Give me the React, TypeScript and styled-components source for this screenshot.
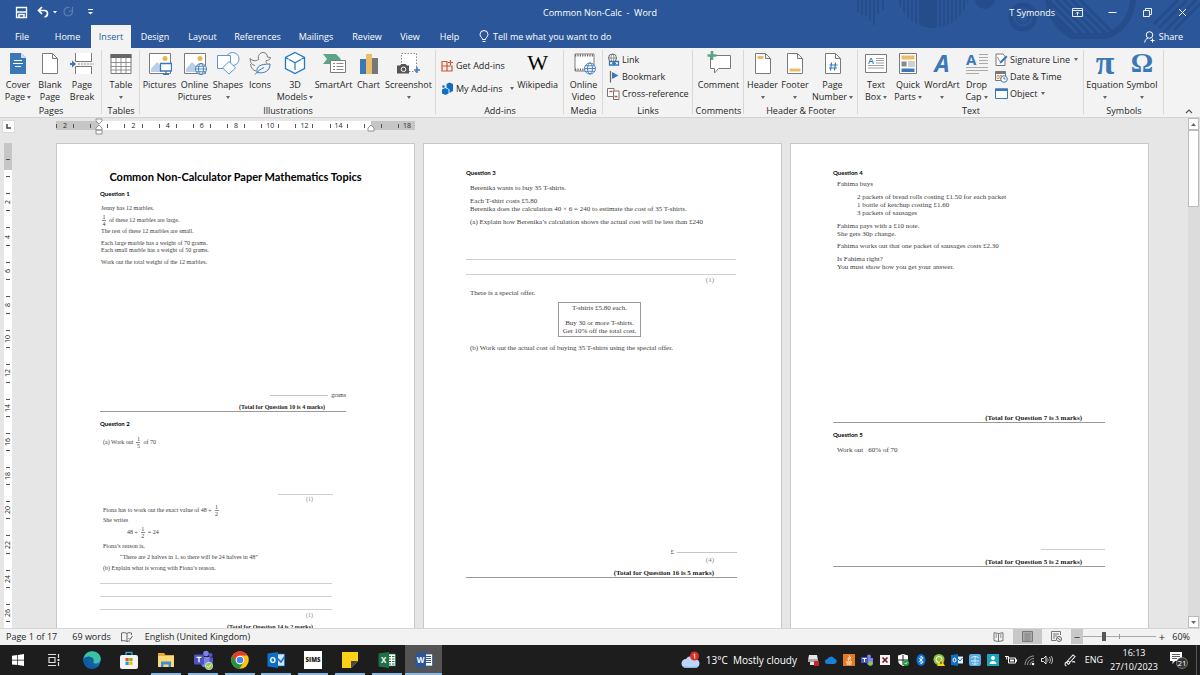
import React from 'react';
import styled, { createGlobalStyle, css } from 'styled-components';

const Global = createGlobalStyle`
  * { box-sizing: border-box; }
  body { margin: 0; font-family: "Open Sans", "Noto Sans", sans-serif; font-size: 9px; color: #262626; overflow: hidden; }
  button { font: inherit; color: inherit; background: none; border: 0; padding: 0; margin: 0; white-space: nowrap; }
  svg { display: block; flex: none; }
`;

const blue = '#2b579a';

/* ---------- shell ---------- */

const Shell = styled.div`
  display: flex;
  flex-direction: column;
  height: 100vh;
  background: #e6e6e6;
`;

const Head = styled.header`
  position: relative;
  flex: none;
  background: ${blue};
  color: #fff;
`;

const Pattern = styled.svg`
  position: absolute;
  top: 0;
  right: 0;
`;

const TitleBar = styled.div`
  position: relative;
  display: grid;
  grid-template-columns: 1fr auto 1fr;
  align-items: center;
  height: 24px;
`;

const QuickTools = styled.div`
  display: flex;
  align-items: center;
  gap: 5px;
  padding-left: 15px;
`;

const WindowTools = styled.div`
  display: flex;
  align-items: center;
  justify-content: flex-end;
`;

const UserName = styled.span`
  margin-right: 5px;
`;

const WinButton = styled.button`
  display: flex;
  justify-content: center;
  width: 35px;
`;

const TabRow = styled.nav`
  position: relative;
  display: flex;
  align-items: stretch;
  height: 24px;
`;

const Tab = styled.button<{ $w: number; $on?: boolean }>`
  width: ${(p) => p.$w}px;
  margin-top: 1px;
  ${(p) => p.$on && css`background: #f3f3f3; color: ${blue};`}
`;

const TabAction = styled.button<{ $right?: boolean }>`
  display: flex;
  align-items: center;
  gap: 4px;
  margin-top: 1px;
  ${(p) => (p.$right ? 'margin-left: auto; margin-right: 17px;' : 'margin-left: 9px;')}
`;

/* ---------- ribbon ---------- */

const Ribbon = styled.div`
  display: flex;
  flex: none;
  height: 70px;
  background: #f3f3f3;
  border-bottom: 1px solid #d2d2d2;
`;

const Group = styled.section<{ $w: number }>`
  display: flex;
  flex-direction: column;
  justify-content: space-between;
  width: ${(p) => p.$w}px;
  padding-top: 3px;
  background: linear-gradient(#d8d8d8, #d8d8d8) right 2px / 1px 64px no-repeat;
`;

const GroupBody = styled.div<{ $center?: boolean }>`
  display: flex;
  padding-left: ${(p) => (p.$center ? 0 : 2)}px;
  justify-content: ${(p) => (p.$center ? 'center' : 'flex-start')};
`;

const GroupName = styled.div`
  text-align: center;
  line-height: 12px;
`;

const BigButton = styled.button<{ $w: number }>`
  display: flex;
  flex-direction: column;
  align-items: center;
  width: ${(p) => p.$w}px;
  line-height: 12px;
  svg { margin-bottom: 4px; }
`;

const Glyph = styled.span<{ $size: number; $sans?: boolean; $slant?: boolean; $ink?: string }>`
  height: 24px;
  margin-bottom: 4px;
  font-family: ${(p) => (p.$sans ? '"Open Sans", sans-serif' : '"Liberation Serif", serif')};
  font-size: ${(p) => p.$size}px;
  font-weight: ${(p) => (p.$ink ? 400 : 700)};
  font-style: ${(p) => (p.$slant ? 'italic' : 'normal')};
  line-height: 24px;
  color: ${(p) => p.$ink || '#3a78b8'};
`;

const LabelLine = styled.span`
  display: flex;
  align-items: center;
  justify-content: center;
  gap: 2px;
  height: 12px;
`;

const Caret = styled.i`
  border: 2px solid transparent;
  border-top: 3px solid #666;
  border-bottom: 0;
`;

const Stack = styled.div<{ $roomy?: boolean }>`
  display: flex;
  flex-direction: column;
  align-items: flex-start;
  padding-left: ${(p) => (p.$roomy ? 3 : 2)}px;
  padding-top: ${(p) => (p.$roomy ? 6 : 0)}px;
  gap: ${(p) => (p.$roomy ? 7 : 1)}px;
`;

const SmallButton = styled.button<{ $gap?: number }>`
  display: flex;
  align-items: center;
  gap: 2px;
  height: 16px;
  ${Caret} { margin-left: ${(p) => p.$gap || 6}px; }
`;

const Collapse = styled.button`
  align-self: flex-end;
  margin: 0 7px 3px auto;
`;

/* ---------- editing area ---------- */

const Editor = styled.main`
  display: flex;
  flex: 1;
  min-height: 0;
`;

const LeftGutter = styled.div`
  display: flex;
  flex-direction: column;
  width: 17px;
  flex: none;
`;

const TabStop = styled.button`
  display: flex;
  align-items: center;
  justify-content: center;
  width: 13px;
  height: 13px;
  margin: 2px 0 10px 2px;
  background: #fcfcfc;
  border: 1px solid #dadada;
`;

const VRuler = styled.div`
  flex: 1;
  min-height: 0;
  overflow: hidden;
  width: 8px;
  margin-left: 4px;
  padding-top: 8px;
  background: linear-gradient(#c6c6c6 27px, #fff 27px);
`;

const VCells = styled.div`
  display: flex;
  flex-direction: column;
  height: 479px;
`;

const VCell = styled.div`
  display: flex;
  flex: 1;
  flex-direction: column;
  align-items: center;
  justify-content: space-between;
  padding: 8px 0;
  i { width: 4px; height: 1px; background: #555; }
  span { writing-mode: vertical-rl; transform: rotate(180deg); font-size: 7px; line-height: 8px; }
`;

const Workspace = styled.div`
  display: flex;
  flex: 1;
  flex-direction: column;
  align-items: center;
  min-width: 0;
`;

const Sheets = styled.div`
  display: flex;
  gap: 8px;
  flex: 1;
  min-height: 0;
  overflow: hidden;
`;

const RulerRow = styled.div`
  flex: none;
  width: 1093px;
  height: 25px;
  padding-top: 3px;
`;

const HRuler = styled.div`
  position: relative;
  width: 359px;
  height: 9px;
  background: linear-gradient(90deg, #c6c6c6 43px, #fff 43px, #fff 315px, #c6c6c6 315px);
`;

const HClip = styled.div`
  overflow: hidden;
`;

const HCells = styled.div`
  display: flex;
  width: 376px;
  margin-left: -8px;
`;

const HCell = styled.div`
  display: flex;
  flex: 1;
  align-items: center;
  justify-content: space-between;
  height: 9px;
  padding: 0 8px;
  font-size: 7px;
  i { width: 1px; height: 4px; background: #555; }
`;

const Marker = styled.svg<{ $x: number }>`
  position: absolute;
  left: ${(p) => p.$x}px;
  top: -3px;
`;

const Sheet = styled.article<{ $large?: boolean }>`
  width: 359px;
  height: 508px;
  flex: none;
  padding: 0 43px 0 ${(p) => (p.$large ? 42 : 43)}px;
  background: #fff;
  border: 1px solid #c8c8c8;
  font-family: "Liberation Serif", serif;
  font-size: ${(p) => (p.$large ? 7 : 6)}px;
  line-height: ${(p) => (p.$large ? 8 : 7)}px;
  color: #3c3c3c;
  white-space: nowrap;
`;

const DocTitle = styled.h1`
  margin: 26px 0 0;
  font: bold 11px/14px Lato, sans-serif;
  color: #000;
  text-align: center;
`;

const Question = styled.h2<{ $mt: number }>`
  margin: ${(p) => p.$mt}px 0 0;
  font: bold 6px/8px Lato, sans-serif;
  color: #000;
`;

const Line = styled.p<{ $mt?: number; $in?: number }>`
  margin: ${(p) => p.$mt || 0}px 0 0;
  padding-left: ${(p) => (p.$in === undefined ? 4 : p.$in)}px;
`;

const MathLine = styled(Line)`
  display: flex;
  align-items: center;
  gap: 3px;
  height: 14px;
`;

const Frac = styled.span`
  display: flex;
  flex-direction: column;
  text-align: center;
  width: 4px;
  span:first-child { border-bottom: 1px solid #888; }
  line-height: 6px;
`;

const Mark = styled.p<{ $mt?: number; $mr: number }>`
  margin: ${(p) => p.$mt || 0}px ${(p) => p.$mr}px 0 0;
  text-align: right;
  color: #888;
`;

const Total = styled.p<{ $mt: number; $mr: number }>`
  margin: ${(p) => p.$mt}px ${(p) => p.$mr}px 0 0;
  text-align: right;
  font-weight: bold;
  color: #222;
`;

const Rule = styled.hr<{ $w: number }>`
  width: ${(p) => p.$w}px;
  height: 1px;
  margin: 0;
  border: 0;
  background: #999;
`;

const Dots = styled.div<{ $mt: number; $w: number; $ml?: number }>`
  width: ${(p) => p.$w}px;
  height: 1px;
  margin: ${(p) => p.$mt}px 0 0 ${(p) => p.$ml || 0}px;
  background: #cfcfcf;
`;

const Answer = styled.div<{ $mt: number; $mr: number }>`
  display: flex;
  align-items: center;
  justify-content: flex-end;
  gap: 3px;
  margin: ${(p) => p.$mt}px ${(p) => p.$mr}px 0 0;
`;

const AnswerLine = styled.i<{ $w: number }>`
  width: ${(p) => p.$w}px;
  height: 1px;
  background: #c4c4c4;
`;

const Offer = styled.div`
  width: 83px;
  height: 35px;
  margin: 5px 0 0 92px;
  padding-top: 1px;
  border: 1px solid #999;
  text-align: center;
  p { margin: 0; }
  p:first-child { margin-bottom: 7px; }
`;

const ScrollBar = styled.div`
  display: flex;
  flex-direction: column;
  width: 12px;
  flex: none;
  background: #dcdcdc;
`;

const ScrollArrow = styled.button`
  display: flex;
  align-items: center;
  justify-content: center;
  height: 12px;
  width: 11px;
  background: #fff;
  border: 1px solid #bbb;
`;

const ScrollTrack = styled.div`
  flex: 1;
`;

const Thumb = styled.div`
  width: 11px;
  height: 77px;
  background: #fff;
  border: 1px solid #bbb;
`;

/* ---------- status bar ---------- */

const Status = styled.footer`
  display: flex;
  flex: none;
  align-items: center;
  height: 17px;
  padding: 0 10px 1px 6px;
  background: #f2f2f2;
  border-top: 1px solid #d6d6d6;
`;

const StatusItem = styled.button<{ $mr?: number }>`
  margin-right: ${(p) => p.$mr || 0}px;
`;

const ViewTools = styled.div`
  display: flex;
  align-self: stretch;
  margin-left: auto;
`;

const ViewButton = styled.button<{ $on?: boolean }>`
  display: flex;
  align-items: center;
  justify-content: center;
  width: 29px;
  background: ${(p) => (p.$on ? '#c8c8c8' : 'transparent')};
`;

const ZoomStep = styled.button<{ $on?: boolean }>`
  width: 12px;
  font-size: 11px;
  line-height: 14px;
  background: ${(p) => (p.$on ? '#c8c8c8' : 'transparent')};
`;

const ZoomRange = styled.input`
  appearance: none;
  align-self: center;
  width: 73px;
  height: 9px;
  margin: 0;
  background:
    linear-gradient(#999, #999) 50% 50% / 1px 5px no-repeat,
    linear-gradient(#aaa, #aaa) 0 50% / 100% 1px no-repeat;
  &::-webkit-slider-thumb {
    appearance: none;
    width: 4px;
    height: 9px;
    background: #555;
  }
`;

const ZoomValue = styled.button`
  width: 22px;
  text-align: right;
`;

/* ---------- task bar ---------- */

const TaskBar = styled.footer`
  display: flex;
  flex: none;
  height: 30px;
  background: #1d1d1d;
  color: #fff;
`;

const TaskButton = styled.button`
  display: flex;
  align-items: center;
  justify-content: center;
  width: 36px;
`;

const Apps = styled.div`
  display: flex;
  width: 368px;
  margin-left: 2px;
`;

const AppButton = styled.button<{ $open?: boolean; $on?: boolean }>`
  display: flex;
  flex: 1;
  align-items: center;
  justify-content: center;
  background:
    ${(p) => (p.$open ? `linear-gradient(#8ab8e0, #8ab8e0) 50% 100% / ${p.$on ? '100%' : '30px'} 2px no-repeat` : 'none')}
    ${(p) => (p.$on ? ', #545454' : '')};
`;

const Tray = styled.div`
  display: flex;
  align-items: center;
  margin-left: auto;
`;

const Weather = styled.button`
  display: flex;
  align-items: center;
  gap: 5px;
  margin-right: 7px;
  font-size: 10px;
`;

const TrayIcon = styled.button<{ $w?: number }>`
  display: flex;
  align-items: center;
  justify-content: center;
  width: ${(p) => p.$w || 18}px;
`;

const TrayText = styled.button<{ $w: number }>`
  width: ${(p) => p.$w}px;
  text-align: center;
  line-height: 14px;
`;

const Notices = styled(TrayIcon)`
  margin: 0 4px;
`;

const Desktop = styled.button`
  width: 4px;
  align-self: stretch;
  border-left: 1px solid #555;
`;

/* ---------- icons ---------- */

type IP = { s?: number; w?: number; h?: number; children: React.ReactNode };
const Ico = ({ s = 24, w, h, children }: IP) => (
  <svg width={w || s} height={h || s} viewBox={`0 0 ${w || s} ${h || s}`} fill="none" aria-hidden="true">
    {children}
  </svg>
);

const G = '#7a7a7a';
const B = '#3a78b8';

const Globe = ({ x, y, r }: { x: number; y: number; r: number }) => (
  <g stroke={B} strokeWidth=".9" fill="#fff">
    <circle cx={x} cy={y} r={r} />
    <ellipse cx={x} cy={y} rx={r * 0.45} ry={r} fill="none" />
    <path d={`M${x - r} ${y}h${2 * r}M${x - r * 0.85} ${y - r / 2}h${1.7 * r}M${x - r * 0.85} ${y + r / 2}h${1.7 * r}`} />
  </g>
);

const Paper = () => <path d="M4.500 2.500h10l5 5v15h-15zM14.500 2.500v5h5" fill="#fff" stroke={G} />;

const Photo = () => (
  <>
    <path d="M1.500 2.500h21v20h-21z" fill="#fff" stroke={G} />
    <path d="M3 21v-3l6-7 5 5v5z" fill="#b7cfe8" />
    <circle cx="17" cy="7.500" r="2.500" fill="#e9b64d" />
  </>
);

const icons = {
  cover: (
    <Ico>
      <path d="M4 2h11l5 5v16H4z" fill={B} />
      <path d="M15 2v5h5z" fill="#cfe0f2" />
      <path d="M8 9.500h8M7 12.500h10M9 15.500h6" stroke="#fff" />
    </Ico>
  ),
  blank: <Ico><Paper /></Ico>,
  pageBreak: (
    <Ico>
      <path d="M5.500 2v8.500h16V2M5.500 23v-7.500h16V23" stroke={G} fill="#fff" />
      <path d="M8 13h16" stroke="#999" strokeDasharray="2 1" />
      <path d="M2 9.500v7l4-3.500z" fill={B} />
      <path d="M0 13h3" stroke={B} strokeWidth="2" />
    </Ico>
  ),
  table: (
    <Ico>
      <path d="M2 3.500h20v19H2z" fill="#fff" stroke={G} />
      <path d="M1.500 3h21v4h-21z" fill="#666" />
      <path d="M2 11.500h20M2 15.500h20M2 19h20M7 7v15M12 7v15M17 7v15" stroke={G} strokeWidth=".8" />
    </Ico>
  ),
  pictures: (
    <Ico>
      <Photo />
      <path d="M12.500 12.500h11v7.500h-11z" fill="#fff" stroke={B} strokeWidth="1.300" />
      <path d="M18 20v3M15 23.300h6" stroke={B} strokeWidth="1.300" />
    </Ico>
  ),
  onlinePictures: <Ico><Photo /><Globe x={18} y={18} r={5.5} /></Ico>,
  shapes: (
    <Ico>
      <circle cx="16.500" cy="8" r="6.500" stroke="#5e97d0" fill="#fff" />
      <path d="M1.500 4.500h13v13h-13z" stroke="#5e97d0" fill="#fff" />
      <path d="M13 10.500l6.500 6.300-6.500 6.300-6.500-6.300z" stroke="#5e97d0" fill="#fff" />
    </Ico>
  ),
  icons: (
    <Ico>
      <path d="M10.500 8.500C9.500 4.500 12 1.500 15 1.500c3 0 4.500 2 4.300 4.500l3.200.500c-.300 2.200-2 3-4.300 3-.700 1 .300 2 .600 3M10.500 8.500c-3 2-6 1.500-8.500-1 .300 4 1.500 6.500 5 7M2.500 13c.500 4 2.500 6.500 5.500 7" stroke={G} />
      <path d="M9 21.500c-1-6 3-8.500 13-8.500 0 6.500-5 10-13 8.500M7 23.500c3-3.500 5-5 9-7" stroke={B} fill="none" />
    </Ico>
  ),
  cube: (
    <Ico>
      <path d="M12 1.500l9.500 5v11L12 22.500l-9.500-5v-11z" fill="#fff" stroke="#1f7ac8" strokeWidth="1.300" />
      <path d="M6 8.500l6 3.200 6-3.200M12 12v7M2.500 6.500l3 1.600M21.500 6.500l-3 1.600" stroke="#1f7ac8" strokeWidth="1.200" />
    </Ico>
  ),
  smartart: (
    <Ico>
      <path d="M1 3h13l5 5-5 5H1l4-5z" fill="#5ba587" />
      <path d="M8.500 9.500h15v12h-15z" fill="#fff" stroke={G} />
      <path d="M11 12.500h2M14.500 12.500h7M11 15.500h2M14.500 15.500h7M11 18.500h2M14.500 18.500h7" stroke={G} strokeWidth=".9" />
    </Ico>
  ),
  chart: (
    <Ico>
      <path d="M3 8h6v15H3z" fill={B} />
      <path d="M9 3h6v20H9z" fill="#ecbd68" />
      <path d="M15 7h6v16h-6z" fill="#777" />
    </Ico>
  ),
  screenshot: (
    <Ico>
      <path d="M4.500 2.500h15v18h-15z" stroke="#888" strokeDasharray="1.500 1.500" fill="#fff" />
      <path d="M0 14.500h3L4.500 13h4l1.500 1.500h2v8H0z" fill="#555" />
      <circle cx="6.500" cy="18.300" r="2.300" stroke="#fff" />
      <path d="M20 16v6M17 19h6" stroke={B} strokeWidth="1.500" />
    </Ico>
  ),
  wiki: <Glyph $size={22} $ink="#000">W</Glyph>,
  video: (
    <Ico>
      <path d="M3 3h19v17H3z" fill="#fff" stroke={G} />
      <path d="M3 4.500h19M3 18.500h12" stroke="#666" strokeWidth="2.200" strokeDasharray="1.200 1.200" />
      <Globe x={18} y={17.5} r={5.5} />
    </Ico>
  ),
  comment: (
    <Ico>
      <path d="M3.500 4.500h20v13h-12l-4 4.500v-4.500h-4z" fill="#fff" stroke={G} />
      <path d="M5 0v9M.500 4.500h9" stroke="#5ba587" strokeWidth="2.600" />
    </Ico>
  ),
  header: <Ico><Paper /><path d="M6.500 5h6v3h-6z" fill="#ecbd68" /></Ico>,
  footer: <Ico><Paper /><path d="M6.500 17.500h11v3h-11z" fill="#ecbd68" /></Ico>,
  pageNo: (
    <Ico><Paper /><path d="M10.500 11.500l-1 8M14.500 11.500l-1 8M8.500 14h8M8 17h8" stroke={B} strokeWidth="1.200" /></Ico>
  ),
  textBox: (
    <Ico>
      <path d="M1.500 3.500h21v18h-21z" fill="#fff" stroke={G} />
      <text x="4" y="13" fontFamily="Open Sans, sans-serif" fontWeight="600" fontSize="9" fill={B}>A</text>
      <path d="M12 7.500h8M12 9.500h8M12 12h8M4 14.500h16M4 17h16" stroke="#888" strokeWidth=".8" />
    </Ico>
  ),
  quick: (
    <Ico>
      <path d="M3.500 2.500h17v20h-17z" fill="#fff" stroke={G} />
      <path d="M5.500 4.500h13v4h-13z" fill="#ecbd68" />
      <path d="M5.500 10.500h5v5h-5z" fill="#888" />
      <path d="M12 11h7M12 13h7M12 15h7" stroke="#888" strokeWidth=".8" />
      <path d="M5.500 17.500h13v3.500h-13z" fill={B} />
    </Ico>
  ),
  wordart: <Glyph $size={24} $sans $slant>A</Glyph>,
  dropCap: (
    <Ico>
      <text x="1" y="14" fontFamily="Open Sans, sans-serif" fontWeight="700" fontSize="15" fill={B}>A</text>
      <path d="M14 3.500h9M14 6.500h9M14 9.500h9M14 12.500h9M1 16.500h22M1 19.500h22M1 22.500h13" stroke="#aaa" />
    </Ico>
  ),
  pi: <Glyph $size={34}>π</Glyph>,
  omega: <Glyph $size={28}>Ω</Glyph>,
  getAdd: (
    <Ico s={13}>
      <path d="M1 2.500h5v4.500H1zM1 7h5v5H1zM6 7h5v5H6z" stroke="#d35230" strokeWidth="1.200" />
      <path d="M9.500 1v5M7 3.500h5" stroke="#d35230" strokeWidth="1.200" />
    </Ico>
  ),
  myAdd: (
    <Ico s={13}>
      <path d="M5.500 2l3-1.500 3.500 1.500v7l-3.500 2V7.500l-3-2z" fill="#0f6fc6" />
      <path d="M1 7.500L4 6l3.500 1.500v4L4.500 13 1 11.500z" fill="#0f6fc6" />
      <circle cx="2.500" cy="4.500" r="1.300" fill="#0f6fc6" />
    </Ico>
  ),
  link: (
    <Ico s={13}>
      <circle cx="5.500" cy="5" r="4" stroke="#666" fill="#fff" />
      <path d="M1.500 5h8M5.500 1c-2 2-2 6 0 8M5.500 1c2 2 2 6 0 8" stroke="#666" strokeWidth=".7" />
      <path d="M2.500 8.500h4v3.500h-4zM7.500 8.500h4v3.500h-4z" fill="#fff" stroke={B} strokeWidth="1.300" />
      <path d="M5 10.300h4" stroke={B} strokeWidth="1.300" />
    </Ico>
  ),
  bookmark: (
    <Ico s={13}>
      <path d="M3.500 1v11.500" stroke="#666" strokeWidth="1.200" />
      <path d="M5 2l6.500 3.500L5 9z" fill={B} />
    </Ico>
  ),
  cross: (
    <Ico s={13}>
      <path d="M.500 1.500h6.500v8H.500z" fill="#fff" stroke="#777" />
      <path d="M6.500 4h5.500v8.500H6.500z" fill="#fff" stroke="#777" />
      <path d="M2.500 4.500h3M7.500 9.500h3" stroke="#d35230" strokeWidth="1.300" />
    </Ico>
  ),
  signature: (
    <Ico s={13}>
      <path d="M1 1h7l2 2.500V12.500H1z" fill="#fff" stroke="#777" />
      <path d="M2.500 4l2.500 5 7-6" stroke="#777" strokeWidth=".8" />
      <path d="M4.500 11l1-3L11 2.500l1.500 1.500L7 9.500z" fill={B} />
    </Ico>
  ),
  date: (
    <Ico s={13}>
      <path d="M.500 1.500h10v9H.500z" fill="#fff" stroke="#777" />
      <path d="M.500 2h10v2H.500z" fill="#777" />
      <path d="M2 5.500h2v3H2zM5 5.500h2v3H5z" stroke="#d98a3c" strokeWidth=".8" />
      <circle cx="9" cy="9" r="3.300" fill="#fff" stroke={B} />
      <path d="M9 7v2h1.500" stroke="#555" strokeWidth=".8" />
    </Ico>
  ),
  object: (
    <Ico s={13}>
      <path d="M.500 2h12v9.500H.500z" fill="#fff" stroke={B} />
      <path d="M0 1.500h13V4H0z" fill={B} />
    </Ico>
  ),
};

const BackPattern = () => (
  <Pattern width="350" height="48" viewBox="0 0 350 48" fill="none" aria-hidden="true">
    <defs>
      <clipPath id="dome"><circle cx="83" cy="-8" r="36" /></clipPath>
      <clipPath id="bowl"><path d="M196 0h72v34h-46c-12-6-22-18-26-34z" /></clipPath>
    </defs>
    <g stroke="#254d8b" strokeWidth="2">
      <path d="M8 0v12M12 0v15M16 0v16M20 0v21M24 0v25M28 0v14M33 0v10" />
      <path d="M50 0v30M54 0v30M58 0v30M62 0v30M66 0v30M90 0v30M94 0v30M98 0v30M102 0v30M106 0v30M110 0v30M114 0v30M118 0v30" clipPath="url(#dome)" />
    </g>
    <path d="M69 0h18v30H69z" fill="#254d8b" clipPath="url(#dome)" />
    <circle cx="135" cy="-1" r="10" fill="#254d8b" />
    <circle cx="173" cy="17" r="12" stroke="#254d8b" strokeWidth="5" />
    <circle cx="173" cy="17" r="6" stroke="#254d8b" strokeWidth="3" strokeDasharray="2 1" />
    <path d="M198 0c2 20 14 30 24 36h34c14-4 26-18 27-36" stroke="#254d8b" strokeWidth="6" />
    <path d="M190 0l44 44M198 0l44 44M206 0l44 44M214 0l44 44M222 0l44 44M230 0l44 44" stroke="#254d8b" strokeWidth="3" clipPath="url(#bowl)" />
    <path d="M304 24L328 0M309 28L337 0M314 32L346 0M324 30L350 4" stroke="#254d8b" strokeWidth="3" />
  </Pattern>
);

/* ---------- helpers ---------- */

type BigProps = { w: number; icon: React.ReactNode; a: string; b?: string; drop?: boolean };
const Big = ({ w, icon, a, b, drop }: BigProps) => (
  <BigButton $w={w}>
    {icon}
    <LabelLine>{a}</LabelLine>
    <LabelLine>{b}{drop && <Caret />}</LabelLine>
  </BigButton>
);

type SmallProps = { icon: React.ReactNode; text: string; drop?: number };
const Small = ({ icon, text, drop }: SmallProps) => (
  <SmallButton $gap={drop}>{icon}{text}{drop ? <Caret /> : null}</SmallButton>
);

type SectionProps = { w: number; name: string; center?: boolean; children: React.ReactNode };
const Section = ({ w, name, center, children }: SectionProps) => (
  <Group $w={w}>
    <GroupBody $center={center}>{children}</GroupBody>
    <GroupName>{name}</GroupName>
  </Group>
);

const Fraction = ({ n, d }: { n: string; d: string }) => <Frac><span>{n}</span><span>{d}</span></Frac>;

const tabs: [string, number][] = [
  ['File', 44], ['Home', 47], ['Insert', 40], ['Design', 48], ['Layout', 47], ['References', 63],
  ['Mailings', 54], ['Review', 48], ['View', 38], ['Help', 41],
];

const hNumbers = ['2', '', '2', '4', '6', '8', '10', '12', '14', '', '18'];
const vNumbers = ['', '2', '4', '6', '8', '10', '12', '14', '16', '18', '20', '22', '24', '26'];

const OfficeTile = ({ c, d, l, kind }: { c: string; d: string; l: string; kind: string }) => (
  <Ico s={18}>
    <path d="M9 3h8.500v12H9z" fill={kind === 'mail' ? '#cfe6f8' : '#fff'} stroke={d} strokeWidth=".7" />
    {kind === 'mail' ? (
      <path d="M10 7l4 4 4-6" stroke={c} strokeWidth="1.500" />
    ) : kind === 'grid' ? (
      <path d="M11 5.500h2M14 5.500h2.500M11 8h2M14 8h2.500M11 10.500h2M14 10.500h2.500M11 13h2M14 13h2.500" stroke={c} strokeWidth="1.200" />
    ) : (
      <path d="M11 5.500h5M11 7.500h5M11 9.500h5M11 11.500h5" stroke={c} />
    )}
    <path d="M.500 2.500L11 1v16L.500 15.500z" fill={c} />
    <text x="5.700" y="12" textAnchor="middle" fontFamily="Open Sans, sans-serif" fontWeight="bold" fontSize="8" fill="#fff">{l}</text>
  </Ico>
);

const appIcons: [string, boolean, React.ReactNode][] = [
  ['Edge', false, (
    <Ico s={18}>
      <circle cx="9" cy="9" r="8.700" fill="#1477c6" />
      <path d="M.500 8C1.500 3 5 .300 9 .300c5 0 8.700 3.500 8.700 7.500 0 3-2.200 4.600-4.700 4.600-2 0-3-.700-2.600-1.600.900-1.500.300-4.500-3.200-4.800C4 5.700 1.500 6.300.500 8z" fill="#39c3a4" />
      <path d="M.500 8C2 6 5 5 7.500 6 5 7 4.500 10 6 12.500c1.500 2.300 5 3.600 9.500 2C13 18 8 18.800 4.500 16.500 1.500 14.700 0 11.500.500 8z" fill="#0e5ba8" />
      <path d="M10.400 10.800c.900-1.500.300-4.500-3.200-4.800-2.500 1.200-2.500 4.500-1.200 6.500 2 2.800 7 3.500 10 .500-2 .800-6 .500-5.600-2.200z" fill="#1d1d1d" opacity=".25" />
    </Ico>
  )],
  ['Store', false, (
    <Ico s={18}>
      <path d="M6 4V1.500h6V4" stroke="#2aa4dd" strokeWidth="1.300" />
      <rect x="0" y="4" width="18" height="14" rx="2" fill="#f4f4f4" />
      <path d="M5.500 7h3.200v3.200H5.500z" fill="#f25022" /><path d="M9.300 7h3.200v3.200H9.300z" fill="#7fba00" />
      <path d="M5.500 10.800h3.200V14H5.500z" fill="#00a4ef" /><path d="M9.300 10.800h3.200V14H9.300z" fill="#ffb900" />
    </Ico>
  )],
  ['File Explorer', true, (
    <Ico s={18}>
      <path d="M1 2h6l1.500 2H17v12H1z" fill="#e8a92c" />
      <path d="M1 5h16v11H1z" fill="#fbd876" />
      <path d="M4 16V10.500h10V16h-2.500v-2.500h-5V16z" fill="#3f8fd2" />
    </Ico>
  )],
  ['Teams', true, (
    <Ico s={20}>
      <circle cx="13" cy="3.500" r="2.800" fill="#7b83eb" /><circle cx="17.500" cy="5" r="2" fill="#5059c9" />
      <path d="M8 7h9v6a4.500 4.500 0 0 1-9 0z" fill="#7b83eb" /><path d="M16.500 7.500H20v5a2.500 2.500 0 0 1-3.500 2z" fill="#5059c9" />
      <rect x="1" y="4.500" width="10" height="10" rx="1" fill="#4b53bc" />
      <path d="M3.500 7.300h5M6 7.300v5" stroke="#fff" strokeWidth="1.300" />
      <circle cx="16" cy="16" r="3.700" fill="#92c353" stroke="#fff" strokeWidth=".6" />
      <path d="M14 16l1.500 1.500 2.500-3" stroke="#fff" />
    </Ico>
  )],
  ['Chrome', true, (
    <Ico s={18}>
      <circle cx="9" cy="9" r="8.800" fill="#fbc116" />
      <path d="M1.400 4.600A8.800 8.800 0 0 1 16.600 4.600H9A4.400 4.400 0 0 0 5 11z" fill="#e33b2e" />
      <path d="M1.400 4.600A8.800 8.800 0 0 0 8.500 17.800L12.800 11.200A4.400 4.400 0 0 1 5 11z" fill="#229342" />
      <circle cx="9" cy="9" r="4.200" fill="#fff" /><circle cx="9" cy="9" r="3.300" fill="#4285f4" />
    </Ico>
  )],
  ['Outlook', true, <OfficeTile c="#0f6fc6" d="#0f6fc6" l="O" kind="mail" />],
  ['SIMS', true, (
    <Ico s={18}>
      <path d="M0 0h18v18H0z" fill="#fff" />
      <text x="9" y="11" textAnchor="middle" fontFamily="Open Sans, sans-serif" fontWeight="800" fontSize="6" fill="#222">SIMS</text>
    </Ico>
  )],
  ['Sticky Notes', true, (
    <Ico s={18}>
      <path d="M1 1h16v9l-7 7H1z" fill="#fcd116" /><path d="M10 17v-7h7z" fill="#4a4a4a" />
    </Ico>
  )],
  ['Excel', true, <OfficeTile c="#1e7145" d="#1e7145" l="X" kind="grid" />],
  ['Word', true, <OfficeTile c="#2b579a" d="#2b579a" l="W" kind="doc" />],
];

const trayIcons: [string, React.ReactNode][] = [
  ['Printer', <Ico s={12}><path d="M2 1h8l1 5H1zM3 7h6v4H3z" fill="#e4e4e4" /><path d="M1 5h10v3H1z" fill="#aaa" /><path d="M7 7h5v5H7z" fill="#c8232c" /></Ico>],
  ['OneDrive', <Ico s={12}><path d="M2.500 10a2.500 2.500 0 0 1 0-5A3.800 3.800 0 0 1 9.300 4.500 2.800 2.800 0 0 1 9.500 10z" fill="#1b7fd6" /></Ico>],
  ['Java', <Ico s={12}><path d="M0 0h12v12H0z" fill="#e57a22" /><path d="M6 1.500c2 2-2.500 2.500-.300 5M8 3c-2 1.500-1 2-.800 3.500M3 8h6M3.500 10h5" stroke="#fff" /></Ico>],
  ['Teams', <Ico s={12}><circle cx="8" cy="2.500" r="2" fill="#7b83eb" /><path d="M5 4h7v4a3 3 0 0 1-6 1z" fill="#7b83eb" /><path d="M0 3h7v6H0z" fill="#4b53bc" /><path d="M1.500 4.500h4M3.500 4.500V8" stroke="#fff" /><circle cx="9.500" cy="9.500" r="2.300" fill="#92c353" /></Ico>],
  ['Blocked', <Ico s={12}><path d="M1 1h10v10H1z" fill="#f4f4f4" /><path d="M3.500 3.500l5 5M8.500 3.500l-5 5" stroke="#7a1018" strokeWidth="1.600" /></Ico>],
  ['Security', <Ico s={12}><path d="M6 0l5 1.500V6c0 3-2 5-5 6-3-1-5-3-5-6V1.500z" fill="#fff" /><path d="M6 1v10M1 6h10" stroke="#1d1d1d" /><circle cx="9" cy="9" r="3" fill="#1fa04b" /><path d="M7.700 9l1 1 1.700-2" stroke="#fff" strokeWidth=".8" /></Ico>],
  ['Bluetooth', <Ico s={12}><ellipse cx="6" cy="6" rx="4.500" ry="6" fill="#0a6fd6" /><path d="M3.800 4l4.400 4L6 10V2l2.200 2-4.400 4" stroke="#fff" strokeWidth=".9" /></Ico>],
  ['Monitor', <Ico s={12}><circle cx="6" cy="5.500" r="5.500" fill="#8cc63f" /><circle cx="6" cy="5.500" r="3" stroke="#fff" /><path d="M8 5l4 7H4z" fill="#f7d11e" /><path d="M8 7.500v2.500" stroke="#222" /></Ico>],
  ['Outlook', <Ico s={12}><path d="M6 2.500h6v7H6z" fill="#e2f0fb" /><path d="M7 5l2 2 2.500-3" stroke="#0f6fc6" /><path d="M0 1l7-1v12l-7-1z" fill="#0f6fc6" /><ellipse cx="3.500" cy="6" rx="1.500" ry="2" stroke="#fff" /></Ico>],
  ['Network', <Ico s={12}><rect width="12" height="12" rx="2" fill="#5aa9e0" /><path d="M2 4c2-2 6-2 8 0M2 7h8M3 9.500c2 1 4 1 6 0M6 2v8" stroke="#d9efff" strokeWidth=".9" /></Ico>],
  ['Account', <Ico s={12}><path d="M0 0h12v12H0z" fill="#18a5b8" /><circle cx="6" cy="4" r="2" fill="#fff" /><path d="M2.500 10c0-4 7-4 7 0z" fill="#fff" /></Ico>],
  ['Battery', <Ico s={12}><path d="M3.500 4h7v5h-7zM10.500 5.500h1v2h-1" stroke="#fff" fill="none" /><path d="M5 5.500h4v2H5z" fill="#fff" /><path d="M0 2.500h3.500v2.500M1.700 2.500v3" stroke="#fff" /></Ico>],
  ['Wi-Fi', <Ico s={12}><g stroke="#aaa" strokeWidth=".9"><path d="M2 11C2 6 6 2 11 2M4.500 11c0-3.500 3-6.500 6.500-6.500M7 11c0-2 2-4 4-4" /></g><circle cx="10" cy="10" r="1.300" fill="#fff" /></Ico>],
  ['Volume', <Ico s={12}><path d="M.500 4.500h2l2.500-2.500v8L2.500 7.500h-2z" stroke="#fff" strokeWidth=".9" /><path d="M6.500 4.500c.800 1 .800 2 0 3M8.300 3c1.500 2 1.500 4 0 6M10 2c2 2.500 2 5.500 0 8" stroke="#ccc" strokeWidth=".9" /></Ico>],
];

/* ---------- documents ---------- */

const SheetOne = () => (
  <Sheet>
    <DocTitle>Common Non-Calculator Paper Mathematics Topics</DocTitle>
    <Question $mt={6}>Question 1</Question>
    <Line $mt={7} $in={1}>Jenny has 12 marbles.</Line>
    <MathLine $mt={1} $in={2}><Fraction n="1" d="4" />of these 12 marbles are large.</MathLine>
    <Line $mt={1} $in={1}>The rest of these 12 marbles are small.</Line>
    <Line $mt={5} $in={1}>Each large marble has a weight of 70 grams.</Line>
    <Line $in={1}>Each small marble has a weight of 50 grams.</Line>
    <Line $mt={5} $in={1}>Work out the total weight of the 12 marbles.</Line>
    <Answer $mt={126} $mr={25}><AnswerLine $w={58} />grams</Answer>
    <Total $mt={5} $mr={46}>(Total for Question 10 is 4 marks)</Total>
    <Rule $w={246} />
    <Question $mt={8}>Question 2</Question>
    <MathLine $mt={7} $in={3}>(a) Work out <Fraction n="1" d="5" /> of 70</MathLine>
    <Dots $mt={45} $w={55} $ml={178} />
    <Mark $mt={1} $mr={58}>(1)</Mark>
    <MathLine $in={3}>Fiona has to work out the exact value of 48 ÷ <Fraction n="1" d="2" /></MathLine>
    <Line $in={3}>She writes</Line>
    <MathLine $mt={1} $in={27}>48 ÷ <Fraction n="1" d="2" /> = 24</MathLine>
    <Line $mt={4} $in={3}>Fiona’s reason is,</Line>
    <Line $mt={4} $in={20}>“There are 2 halves in 1, so there will be 24 halves in 48”</Line>
    <Line $mt={4} $in={3}>(b) Explain what is wrong with Fiona’s reason.</Line>
    <Dots $mt={11} $w={232} />
    <Dots $mt={12} $w={232} />
    <Dots $mt={12} $w={232} />
    <Mark $mt={2} $mr={58}>(1)</Mark>
    <Total $mt={5} $mr={58}>(Total for Question 14 is 2 marks)</Total>
  </Sheet>
);

const SheetTwo = () => (
  <Sheet $large>
    <Question $mt={25}>Question 3</Question>
    <Line $mt={7}>Berenika wants to buy 35 T-shirts.</Line>
    <Line $mt={5}>Each T-shirt costs £5.80</Line>
    <Line>Berenika does the calculation 40 × 6 = 240 to estimate the cost of 35 T-shirts.</Line>
    <Line $mt={5}>(a) Explain how Berenika’s calculation shows the actual cost will be less than £240</Line>
    <Dots $mt={33} $w={270} />
    <Dots $mt={14} $w={270} />
    <Mark $mt={1} $mr={24}>(1)</Mark>
    <Line $mt={5}>There is a special offer.</Line>
    <Offer>
      <p>T-shirts £5.80 each.</p>
      <p>Buy 30 or more T-shirts.</p>
      <p>Get 10% off the total cost.</p>
    </Offer>
    <Line $mt={7}>(b) Work out the actual cost of buying 35 T-shirts using the special offer.</Line>
    <Answer $mt={196} $mr={1}>£<AnswerLine $w={60} /></Answer>
    <Mark $mr={24}>(4)</Mark>
    <Total $mt={5} $mr={24}>(Total for Question 16 is 5 marks)</Total>
    <Rule $w={271} />
  </Sheet>
);

const SheetThree = () => (
  <Sheet $large>
    <Question $mt={25}>Question 4</Question>
    <Line $mt={3}>Fahima buys</Line>
    <Line $mt={5} $in={24}>2 packets of bread rolls costing £1.50 for each packet</Line>
    <Line $in={24}>1 bottle of ketchup costing £1.60</Line>
    <Line $in={24}>3 packets of sausages</Line>
    <Line $mt={5}>Fahima pays with a £10 note.</Line>
    <Line>She gets 30p change.</Line>
    <Line $mt={4}>Fahima works out that one packet of sausages costs £2.30</Line>
    <Line $mt={5}>Is Fahima right?</Line>
    <Line>You must show how you get your answer.</Line>
    <Total $mt={143} $mr={23}>(Total for Question 7 is 3 marks)</Total>
    <Rule $w={272} />
    <Question $mt={8}>Question 5</Question>
    <Line $mt={7}>Work out &nbsp; 60% of 70</Line>
    <Dots $mt={95} $w={64} $ml={208} />
    <Total $mt={8} $mr={23}>(Total for Question 5 is 2 marks)</Total>
    <Rule $w={272} />
  </Sheet>
);

/* ---------- app ---------- */

export default function App() {
  return (
    <Shell>
      <Global />
      <Head>
        <BackPattern />
        <TitleBar>
          <QuickTools>
            <button aria-label="Save">
              <Ico s={13}><path d="M1.500 1.500h10v10h-10z" stroke="#fff" strokeWidth="1.300" /><path d="M2 6h9M4 11V8.500h5V11" stroke="#fff" strokeWidth="1.500" /></Ico>
            </button>
            <button aria-label="Undo">
              <Ico w={24} h={12}><path d="M9 1L5.500 4.500 9 8M6 4.500h5.500c4 0 4 6 0 6.500" stroke="#fff" strokeWidth="1.700" /><path d="M20 5h4l-2 2.500z" fill="#fff" /></Ico>
            </button>
            <button aria-label="Redo">
              <Ico w={14} h={12}><path d="M7.500 1.500A4.300 4.300 0 1 0 10.500 5M10.500 1v4H7" stroke="#5b80b8" strokeWidth="1.200" /></Ico>
            </button>
            <button aria-label="Customise">
              <Ico w={20} h={10}><path d="M7 2.500h5" stroke="#fff" /><path d="M7 5h5l-2.500 2.500z" fill="#fff" /></Ico>
            </button>
          </QuickTools>
          <span>Common Non-Calc&nbsp; -&nbsp; Word</span>
          <WindowTools>
            <UserName>T Symonds</UserName>
            <WinButton aria-label="Ribbon display">
              <Ico w={11} h={9}><path d="M.500.500h10v8H.500zM.500 2.500h10M5.500 7.500V4M4 5.500L5.500 4 7 5.500" stroke="#fff" strokeWidth=".9" /></Ico>
            </WinButton>
            <WinButton aria-label="Minimise"><Ico w={9} h={9}><path d="M.500 4.500h8" stroke="#fff" /></Ico></WinButton>
            <WinButton aria-label="Restore"><Ico w={9} h={9}><path d="M.500 2.500h6v6h-6zM2.500 2.500v-2h6v6h-2" stroke="#fff" strokeWidth=".9" /></Ico></WinButton>
            <WinButton aria-label="Close"><Ico w={9} h={9}><path d="M1 1l7 7M8 1L1 8" stroke="#fff" /></Ico></WinButton>
          </WindowTools>
        </TitleBar>
        <TabRow>
          {tabs.map(([name, w]) => <Tab key={name} $w={w} $on={name === 'Insert'}>{name}</Tab>)}
          <TabAction>
            <Ico w={10} h={13}><path d="M3.500 9.500c0-2-2.500-2.500-2.500-5a4 4 0 0 1 8 0c0 2.500-2.500 3-2.500 5zM3.500 11.500h3" stroke="#fff" /></Ico>
            Tell me what you want to do
          </TabAction>
          <TabAction $right>
            <Ico w={11} h={12}><circle cx="5.500" cy="4" r="3.300" stroke="#fff" /><path d="M.700 11.500C1 9 2.500 7.500 4 7M8.500 7.500v4M6.500 9.500h4" stroke="#fff" /></Ico>
            Share
          </TabAction>
        </TabRow>
      </Head>

      <Ribbon>
        <Section w={102} name="Pages">
          <Big w={32} icon={icons.cover} a="Cover" b="Page" drop />
          <Big w={32} icon={icons.blank} a="Blank" b="Page" />
          <Big w={32} icon={icons.pageBreak} a="Page" b="Break" />
        </Section>
        <Section w={38} name="Tables" center>
          <Big w={34} icon={icons.table} a="Table" drop />
        </Section>
        <Section w={296} name="Illustrations">
          <Big w={35} icon={icons.pictures} a="Pictures" />
          <Big w={35} icon={icons.onlinePictures} a="Online" b="Pictures" />
          <Big w={32} icon={icons.shapes} a="Shapes" drop />
          <Big w={32} icon={icons.icons} a="Icons" />
          <Big w={38} icon={icons.cube} a="3D" b="Models" drop />
          <Big w={39} icon={icons.smartart} a="SmartArt" />
          <Big w={31} icon={icons.chart} a="Chart" />
          <Big w={49} icon={icons.screenshot} a="Screenshot" drop />
        </Section>
        <Section w={128} name="Add-ins">
          <Stack $roomy>
            <Small icon={icons.getAdd} text="Get Add-ins" />
            <Small icon={icons.myAdd} text="My Add-ins" drop={5} />
          </Stack>
          <Big w={48} icon={icons.wiki} a="Wikipedia" />
        </Section>
        <Section w={39} name="Media" center>
          <Big w={36} icon={icons.video} a="Online" b="Video" />
        </Section>
        <Section w={90} name="Links">
          <Stack>
            <Small icon={icons.link} text="Link" />
            <Small icon={icons.bookmark} text="Bookmark" />
            <Small icon={icons.cross} text="Cross-reference" />
          </Stack>
        </Section>
        <Section w={51} name="Comments" center>
          <Big w={48} icon={icons.comment} a="Comment" />
        </Section>
        <Section w={114} name="Header &amp; Footer">
          <Big w={33} icon={icons.header} a="Header" drop />
          <Big w={32} icon={icons.footer} a="Footer" drop />
          <Big w={43} icon={icons.pageNo} a="Page" b="Number" drop />
        </Section>
        <Section w={226} name="Text">
          <Big w={32} icon={icons.textBox} a="Text" b="Box" drop />
          <Big w={32} icon={icons.quick} a="Quick" b="Parts" drop />
          <Big w={36} icon={icons.wordart} a="WordArt" drop />
          <Big w={33} icon={icons.dropCap} a="Drop" b="Cap" drop />
          <Stack>
            <Small icon={icons.signature} text="Signature Line" drop={2} />
            <Small icon={icons.date} text="Date &amp; Time" />
            <Small icon={icons.object} text="Object" drop={2} />
          </Stack>
        </Section>
        <Section w={80} name="Symbols">
          <Big w={38} icon={icons.pi} a="Equation" drop />
          <Big w={36} icon={icons.omega} a="Symbol" drop />
        </Section>
        <Collapse aria-label="Collapse ribbon"><Ico w={8} h={6}><path d="M1 5l3-3 3 3" stroke="#555" strokeWidth="1.200" /></Ico></Collapse>
      </Ribbon>

      <Editor>
        <LeftGutter>
          <TabStop aria-label="Tab stop"><Ico s={5}><path d="M1 0v4h4" stroke="#444" strokeWidth="1.500" /></Ico></TabStop>
          <VRuler>
            <VCells>
              {vNumbers.map((n, i) => <VCell key={i}><i /><span>{n}</span><i /></VCell>)}
            </VCells>
          </VRuler>
        </LeftGutter>
        <Workspace>
          <RulerRow>
            <HRuler>
              <HClip>
                <HCells>
                  {hNumbers.map((n, i) => <HCell key={i}><i /><span>{n}</span><i /></HCell>)}
                </HCells>
              </HClip>
              <Marker $x={39} width="8" height="18" viewBox="0 0 8 18" fill="#fff" stroke="#888" strokeWidth=".9">
                <path d="M1 1h6v2L4 6 1 3zM4 7l3 3v2H1v-2zM1 12h6v4H1z" />
              </Marker>
              <Marker $x={311} width="8" height="18" viewBox="0 0 8 18" fill="#fff" stroke="#888" strokeWidth=".9">
                <path d="M4 7l3 3v3H1v-3z" />
              </Marker>
            </HRuler>
          </RulerRow>
          <Sheets>
            <SheetOne />
            <SheetTwo />
            <SheetThree />
          </Sheets>
        </Workspace>
        <ScrollBar>
          <ScrollArrow aria-label="Scroll up"><Ico w={5} h={3}><path d="M0 3h5L2.500 0z" fill="#666" /></Ico></ScrollArrow>
          <ScrollTrack><Thumb /></ScrollTrack>
          <ScrollArrow aria-label="Scroll down"><Ico w={5} h={3}><path d="M0 0h5L2.500 3z" fill="#666" /></Ico></ScrollArrow>
        </ScrollBar>
      </Editor>

      <Status>
        <StatusItem $mr={15}>Page 1 of 17</StatusItem>
        <StatusItem $mr={10}>69 words</StatusItem>
        <StatusItem $mr={12} aria-label="Proofing">
          <Ico w={12} h={10}><path d="M6 1.500C4.500.500 2.500.500.500 1v8c2-.500 4-.500 5.500.500V1.500C7 .500 9 .500 10.500 1v2M6 9.500C7 9 8 9 9 9M7.500 6l1.500 1.500L11.500 4" stroke="#666" /></Ico>
        </StatusItem>
        <StatusItem>English (United Kingdom)</StatusItem>
        <ViewTools>
          <ViewButton aria-label="Read mode"><Ico w={11} h={10}><path d="M5.500 1.500L1 .700v8l4.500.800L10 8.700v-8zM5.500 1.500v8M2.500 3h1.500M2.500 5h1.500M7 3h1.500M7 5h1.500" stroke="#777" /></Ico></ViewButton>
          <ViewButton $on aria-label="Print layout"><Ico w={11} h={11}><path d="M.500.500h10v10H.500z" stroke="#777" fill="#aaa" /><path d="M2.500 3h6M2.500 5h6M2.500 7h6M2.500 9h6" stroke="#777" strokeWidth=".8" /></Ico></ViewButton>
          <ViewButton aria-label="Web layout"><Ico w={11} h={11}><path d="M5 9.500H.500v-9h9V4M2 3h6M2 5h4M2 7h2" stroke="#777" /><circle cx="8" cy="8" r="2.500" stroke="#666" /><path d="M6.500 7l3 2" stroke="#666" /></Ico></ViewButton>
          <ZoomStep $on aria-label="Zoom out">−</ZoomStep>
          <ZoomRange type="range" aria-label="Zoom" min="0" max="100" defaultValue="28" />
          <ZoomStep aria-label="Zoom in">+</ZoomStep>
          <ZoomValue>60%</ZoomValue>
        </ViewTools>
      </Status>

      <TaskBar>
        <TaskButton aria-label="Start"><Ico s={12}><path d="M0 1.700l5.300-.700v4.700H0zM6 .900L12 0v5.700H6zM0 6.400h5.300v4.700L0 10.400zM6 6.400h6V12l-6-.900z" fill="#fff" /></Ico></TaskButton>
        <TaskButton aria-label="Task view"><Ico s={12}><path d="M0 .500h8M0 11.500h8M1 3.500h6v5H1zM10.500 0v4M10.500 8v4" stroke="#ddd" strokeWidth="1.200" /><path d="M9.500 5h2v2h-2z" fill="#ddd" /></Ico></TaskButton>
        <Apps>
          {appIcons.map(([name, open, icon]) => (
            <AppButton key={name} $open={open} $on={name === 'Word'} aria-label={name}>{icon}</AppButton>
          ))}
        </Apps>
        <Tray>
          <Weather>
            <Ico w={20} h={18}><path d="M5 17a4.500 4.500 0 0 1 0-9 5 5 0 0 1 9 0 4.500 4.500 0 0 1 0 9z" fill="#bcd6f7" /><path d="M5 17a4 4 0 0 1-3-2c4 1 11 1 15 0a4 4 0 0 1-3 2z" fill="#8fb4ea" /><circle cx="13.500" cy="5" r="4.500" fill="#d93025" /><path d="M12.500 4l1.200-1v4.500" stroke="#fff" strokeWidth=".9" /></Ico>
            <span>13°C&nbsp; Mostly cloudy</span>
          </Weather>
          {trayIcons.map(([name, icon]) => <TrayIcon key={name} aria-label={name}>{icon}</TrayIcon>)}
          <TrayIcon $w={26} aria-label="Pen"><Ico s={13}><path d="M3.500 12c-2-.500-2-3 0-4 2-1.500 4 0 3 1.500S3 9.500 4.500 7L10 1l2 1.500L6 9.500M9 8c2-1 3 .500 3 .500" stroke="#eee" strokeWidth="1.100" /></Ico></TrayIcon>
          <TrayText $w={24}>ENG</TrayText>
          <TrayText $w={56}>16:13<br />27/10/2023</TrayText>
          <Notices $w={26} aria-label="Notifications">
            <Ico w={20} h={18}><path d="M1 1h12v9H6l-2.500 3v-3H1z" fill="#fff" /><path d="M3 3.500h8M3 5.500h8M3 7.500h5" stroke="#333" strokeWidth=".8" /><circle cx="13" cy="12" r="5.500" fill="#333" stroke="#999" strokeWidth=".7" /><text x="13" y="15" textAnchor="middle" fontFamily="Open Sans, sans-serif" fontSize="8" fill="#fff">21</text></Ico>
          </Notices>
          <Desktop aria-label="Show desktop" />
        </Tray>
      </TaskBar>
    </Shell>
  );
}
